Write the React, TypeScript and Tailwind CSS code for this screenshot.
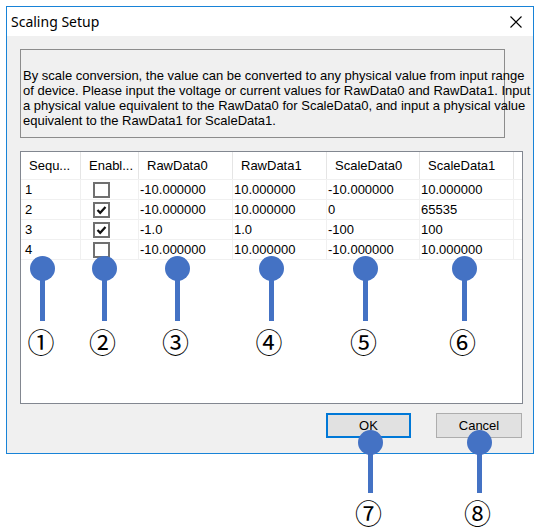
import React from "react";

const body = { fontFamily: "'Liberation Sans Narrow','Liberation Sans',Arial,sans-serif" };

type Row = { seq: string; en: boolean; v: string[] };
const rows: Row[] = [
  { seq: "1", en: false, v: ["-10.000000", "10.000000", "-10.000000", "10.000000"] },
  { seq: "2", en: true, v: ["-10.000000", "10.000000", "0", "65535"] },
  { seq: "3", en: true, v: ["-1.0", "1.0", "-100", "100"] },
  { seq: "4", en: false, v: ["-10.000000", "10.000000", "-10.000000", "10.000000"] },
];

function Check({ on }: { on: boolean }) {
  return (
    <div className="ml-[12px] mt-[2px] w-[17px] h-[16px] border-2 border-[#707070] bg-white flex items-center justify-center">
      {on && (
        <svg width="11" height="10" viewBox="0 0 11 10">
          <path d="M1.5 5 L4.2 7.8 L9.5 2" fill="none" stroke="#111" strokeWidth="2.2" />
        </svg>
      )}
    </div>
  );
}

function Marker({ x, y, len, n, ny, nx }: { x: number; y: number; len: number; n: string; ny: number; nx: number }) {
  return (
    <>
      <div className="absolute w-[5px] bg-[#4472c4]" style={{ left: x - 2.5, top: y, height: len }} />
      <div className="absolute w-[25px] h-[25px] rounded-full bg-[#4472c4]" style={{ left: x - 12.5, top: y - 12.5 }} />
      <div
        className="absolute w-[40px] h-[30px] flex items-center justify-center text-[27px] leading-[30px] text-black"
        style={{ left: nx - 20, top: ny - 15, fontFamily: "'Noto Sans CJK JP','Noto Sans CJK SC',sans-serif" }}
      >
        {n}
      </div>
    </>
  );
}

const widths = [60, 58, 94, 94, 93, 94];
const heads = ["Sequ...", "Enabl...", "RawData0", "RawData1", "ScaleData0", "ScaleData1"];

export default function App() {
  return (
    <div className="relative w-[541px] h-[532px] bg-white overflow-hidden" style={body}>
      <div className="ml-[6px] mt-[6px] w-[528px] h-[448px] border border-[#1883d7] bg-[#f0f0f0] flex flex-col">
        <div className="h-[29px] bg-white flex items-center justify-between pl-[4px] pr-[11px]">
          <span className="text-[14px] text-black" style={{ fontFamily: "'Noto Sans',sans-serif" }}>
            Scaling Setup
          </span>
          <svg width="12" height="12" viewBox="0 0 12 12">
            <path d="M0.5 0.5 L11.5 11.5 M11.5 0.5 L0.5 11.5" stroke="#000" strokeWidth="1.1" />
          </svg>
        </div>
        <div className="pl-[13px] pt-[13px] flex flex-col">
          <div className="w-[485px] h-[89px] border border-[#8c8c8c] pt-[18px] pl-[2px] text-[13px] leading-[15px] text-black whitespace-nowrap">
            <div>By scale conversion, the value can be converted to any physical value from input range</div>
            <div>of device. Please input the voltage or current values for RawData0 and RawData1. Input</div>
            <div>a physical value equivalent to the RawData0 for ScaleData0, and input a physical value</div>
            <div>equivalent to the RawData1 for ScaleData1.</div>
          </div>
          <div className="mt-[13px] w-[503px] h-[253px] border border-[#828790] bg-white flex flex-col text-[13px] text-black">
            <div className="h-[28px] flex border-b border-[#f0f0f0]">
              {heads.map((h, i) => (
                <div
                  key={h}
                  className="h-full border-r border-[#e5e5e5] flex items-center pl-[8px]"
                  style={{ width: widths[i] }}
                >
                  {h}
                </div>
              ))}
            </div>
            {rows.map((r) => (
              <div key={r.seq} className="h-[20px] flex border-b border-[#f0f0f0]">
                <div className="h-full border-r border-[#f0f0f0] pl-[4px] flex items-center" style={{ width: widths[0] }}>
                  {r.seq}
                </div>
                <div className="h-full border-r border-[#f0f0f0]" style={{ width: widths[1] }}>
                  <Check on={r.en} />
                </div>
                {r.v.map((v, i) => (
                  <div
                    key={i}
                    className="h-full border-r border-[#f0f0f0] pl-[1px] flex items-center"
                    style={{ width: widths[i + 2] }}
                  >
                    {v}
                  </div>
                ))}
              </div>
            ))}
          </div>
          <div className="mt-[9px] flex justify-end gap-[25px] pr-[11px] text-[13px] text-black">
            <div className="w-[85px] h-[25px] border-2 border-[#0078d7] bg-[#e1e1e1] flex items-center justify-center">OK</div>
            <div className="w-[86px] h-[25px] border border-[#adadad] bg-[#e1e1e1] flex items-center justify-center">Cancel</div>
          </div>
        </div>
      </div>

      <Marker x={42.5} y={268.5} len={52} n="①" nx={41} ny={342} />
      <Marker x={104.5} y={268.5} len={52} n="②" nx={102.5} ny={342} />
      <Marker x={177.5} y={268.5} len={52} n="③" nx={175.5} ny={342} />
      <Marker x={271} y={268.5} len={52} n="④" nx={269} ny={342} />
      <Marker x={365.5} y={268.5} len={52} n="⑤" nx={363.5} ny={342} />
      <Marker x={464.5} y={268.5} len={52} n="⑥" nx={462.5} ny={342} />
      <Marker x={370.5} y={442} len={51} n="⑦" nx={368.5} ny={513} />
      <Marker x={479} y={442} len={51} n="⑧" nx={477.5} ny={513} />
    </div>
  );
}
